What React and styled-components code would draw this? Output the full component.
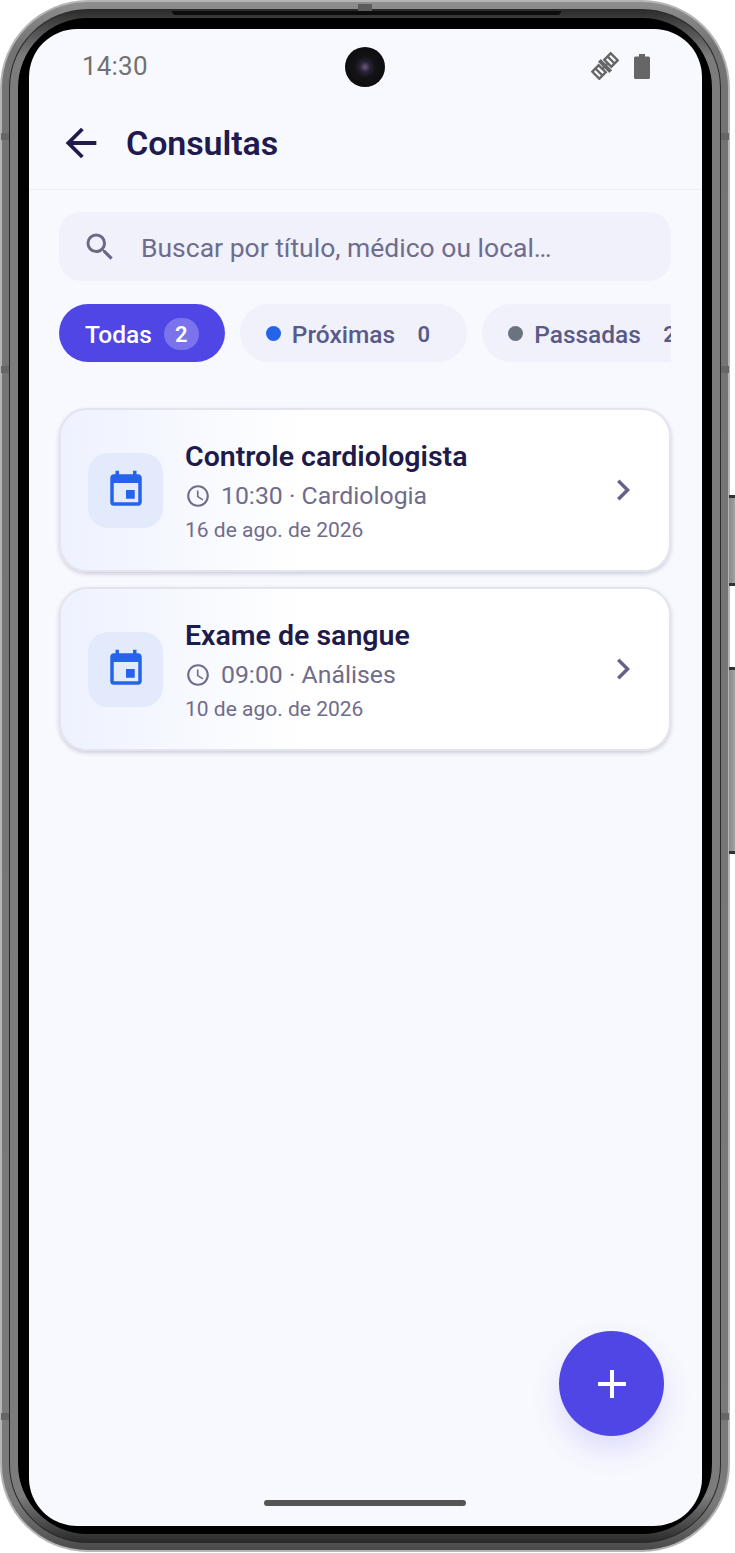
import React from 'react';
import styled, { createGlobalStyle } from 'styled-components';
import { MdArrowBack, MdSearch, MdEvent, MdAccessTime, MdChevronRight, MdAdd } from 'react-icons/md';

const Global = createGlobalStyle`
  html, body { margin: 0; padding: 0; background: #fff; }
  body { font-family: Roboto, "Liberation Sans", sans-serif; width: 735px; height: 1553px; overflow: hidden; }
  * { box-sizing: border-box; }
`;

const Stage = styled.div`
  position: relative;
  width: 735px;
  height: 1553px;
  padding-right: 5px;
`;

const SideButton = styled.div`
  position: absolute;
  right: 0;
  top: ${p => p.$top}px;
  width: 6px;
  height: ${p => p.$height}px;
  background: linear-gradient(90deg, #8a8a8a, #a2a2a2);
  border-top: 3px solid #333;
  border-bottom: 3px solid #333;
`;

const Notch = styled.div`
  position: absolute;
  ${p => (p.$side === 'left' ? 'left: 1px;' : 'left: 721px;')}
  top: ${p => p.$top}px;
  width: 8px;
  height: 7px;
  background: #666;
`;

const TopStud = styled.div`
  position: absolute;
  left: 358px;
  top: 4px;
  width: 14px;
  height: 7px;
  background: #5c5c5c;
`;

const Antenna = styled.div`
  position: absolute;
  left: 172px;
  top: 11px;
  width: 389px;
  height: 4px;
  border-radius: 0 0 4px 4px;
  background: #0c0c0c;
`;

const Frame = styled.div`
  width: 730px;
  height: 1552px;
  border-radius: 88px;
  padding: 2px;
  background: #b5b5b5;
`;

const FrameBand = styled.div`
  width: 100%;
  height: 100%;
  border-radius: 86px;
  padding: 7px;
  background: linear-gradient(#8e8e8e, #737373 3%, #7a7a7a 97%, #4a4a4a);
`;

const FrameLine = styled.div`
  width: 100%;
  height: 100%;
  border-radius: 79px;
  padding: 1px;
  background: #2a2a2a;
`;

const FrameInner = styled.div`
  width: 100%;
  height: 100%;
  border-radius: 78px;
  padding: 8px;
  background: linear-gradient(#2c2c2c, #7c7c7c 3%, #7c7c7c 97%, #2a2a2a);
`;

const Bezel = styled.div`
  width: 100%;
  height: 100%;
  border-radius: 70px;
  padding: 11px 10px 8px 11px;
  background: #000;
`;

const Screen = styled.div`
  position: relative;
  width: 100%;
  height: 100%;
  border-radius: 48px;
  overflow: hidden;
  background: #f8f9fe;
  display: flex;
  flex-direction: column;
`;

const StatusBar = styled.div`
  height: 76px;
  flex: none;
  display: flex;
  align-items: center;
  justify-content: space-between;
  padding: 0 52px 2px 53px;
`;

const Time = styled.span`
  font-size: 26px;
  font-weight: 400;
  letter-spacing: 0.2px;
  color: #727272;
`;

const StatusIcons = styled.div`
  display: flex;
  align-items: center;
  gap: 15px;
  color: #666;
`;

const Camera = styled.div`
  position: absolute;
  left: 316px;
  top: 18px;
  width: 40px;
  height: 40px;
  border-radius: 50%;
  background: radial-gradient(circle at 50% 50%, #6d5a7d 0, #2a2438 18%, #141418 36%, #070707 100%);
`;

const AppBar = styled.header`
  height: 85px;
  flex: none;
  display: flex;
  align-items: center;
  gap: 22px;
  padding: 0 0 9px 29px;
  border-bottom: 1px solid #eceef4;
  color: #211a4f;
`;

const Heading = styled.h1`
  margin: 0;
  font-size: 34px;
  font-weight: 600;
  letter-spacing: -0.1px;
  color: #211a4f;
`;

const Content = styled.main`
  flex: 1;
  display: flex;
  flex-direction: column;
  padding: 22px 31px 0 30px;
`;

const SearchBox = styled.div`
  height: 69px;
  flex: none;
  display: flex;
  align-items: center;
  gap: 23px;
  padding: 0 0 0 23px;
  border-radius: 22px;
  background: #f0f1fb;
  color: #6b6888;
`;

const SearchText = styled.span`
  font-size: 26.5px;
  padding-top: 2px;
  color: #6f6c8c;
`;

const Chips = styled.div`
  display: flex;
  gap: 15px;
  margin-top: 23px;
  overflow: hidden;
  flex: none;
`;

const Chip = styled.div`
  height: 58px;
  flex: none;
  display: flex;
  align-items: center;
  gap: ${p => (p.$active ? 12 : 11)}px;
  padding: 2px 26px 0;
  border-radius: 29px;
  font-size: 24.5px;
  font-weight: 500;
  background: ${p => (p.$active ? '#4f46e5' : '#f0f1fb')};
  color: ${p => (p.$active ? '#fff' : '#5a5a88')};
`;

const Dot = styled.i`
  width: 15px;
  height: 15px;
  margin-top: -2px;
  border-radius: 50%;
  background: ${p => p.$color};
`;

const Count = styled.span`
  min-width: 35px;
  height: 32px;
  border-radius: 16px;
  display: flex;
  align-items: center;
  justify-content: center;
  font-size: 22px;
  font-weight: 600;
  background: ${p => (p.$active ? '#7a73eb' : 'transparent')};
  color: ${p => (p.$active ? '#fff' : '#5a5a88')};
`;

const CardList = styled.div`
  display: flex;
  flex-direction: column;
  gap: 15px;
  margin-top: 46px;
`;

const Card = styled.article`
  height: 164px;
  display: flex;
  align-items: center;
  gap: 22px;
  padding: 0 27px;
  border-radius: 28px;
  border: 2px solid #e3e4ee;
  background: linear-gradient(90deg, #eef2fe 0%, #ffffff 40%);
  box-shadow: 0 2px 4px rgba(50, 45, 90, 0.22);
`;

const IconTile = styled.div`
  width: 75px;
  height: 75px;
  flex: none;
  border-radius: 20px;
  display: flex;
  align-items: center;
  justify-content: center;
  background: #e2eafc;
  color: #2563eb;
`;

const CardBody = styled.div`
  flex: 1;
  display: flex;
  flex-direction: column;
  gap: 4px;
  padding-top: 2px;
`;

const CardTitle = styled.div`
  font-size: 28.5px;
  font-weight: 600;
  color: #1e1b4b;
  line-height: 36px;
`;

const CardMeta = styled.div`
  display: flex;
  align-items: center;
  gap: 10px;
  font-size: 24.8px;
  color: #6f6c8c;
  line-height: 34px;
`;

const CardDate = styled.div`
  font-size: 21px;
  color: #6f6c8c;
  line-height: 26px;
`;

const Chevron = styled.div`
  flex: none;
  display: flex;
  margin-right: -2px;
  color: #64618a;
`;

const Fab = styled.button`
  position: absolute;
  left: 530px;
  top: 1302px;
  width: 105px;
  height: 105px;
  border: 0;
  border-radius: 50%;
  padding: 0;
  display: flex;
  align-items: center;
  justify-content: center;
  background: #4f46e5;
  color: #fff;
  box-shadow: 0 14px 30px rgba(79, 70, 229, 0.16);
`;

const HomeBar = styled.div`
  position: absolute;
  left: 235px;
  top: 1471px;
  width: 202px;
  height: 6px;
  border-radius: 3px;
  background: #555;
`;

const SatelliteIcon = () => (
  <svg width="28" height="28" viewBox="0 0 28 28" fill="none">
    <g transform="rotate(-45 14 14)" stroke="#666" strokeWidth="2.4">
      <rect x="1" y="9" width="9" height="10" />
      <line x1="5.5" y1="9" x2="5.5" y2="19" />
      <rect x="18" y="9" width="9" height="10" />
      <line x1="22.5" y1="9" x2="22.5" y2="19" />
      <rect x="12" y="6" width="4" height="16" fill="#666" stroke="none" />
      <line x1="10" y1="14" x2="18" y2="14" />
    </g>
  </svg>
);

const BatteryIcon = () => (
  <svg width="16" height="25" viewBox="0 0 16 25">
    <path d="M5 0h6v2.5h3.5a1.5 1.5 0 0 1 1.5 1.5v19.5a1.5 1.5 0 0 1-1.5 1.5h-13A1.5 1.5 0 0 1 0 23.5V4a1.5 1.5 0 0 1 1.5-1.5H5z" fill="#666" />
  </svg>
);

const items = [
  { title: 'Controle cardiologista', meta: '10:30 · Cardiologia', date: '16 de ago. de 2026' },
  { title: 'Exame de sangue', meta: '09:00 · Análises', date: '10 de ago. de 2026' },
];

const notches = [
  ['left', 133], ['left', 366], ['left', 1413],
  ['right', 133], ['right', 366], ['right', 1413],
];

export default function App() {
  return (
    <Stage>
      <Global />
      <SideButton $top={495} $height={91} />
      <SideButton $top={667} $height={187} />
      <Frame>
        <FrameBand>
          <FrameLine>
            <FrameInner>
              <Bezel>
                <Screen>
                  <StatusBar>
                    <Time>14:30</Time>
                    <StatusIcons>
                      <SatelliteIcon />
                      <BatteryIcon />
                    </StatusIcons>
                  </StatusBar>
                  <Camera />
                  <AppBar>
                    <MdArrowBack size={46} />
                    <Heading>Consultas</Heading>
                  </AppBar>
                  <Content>
                    <SearchBox>
                      <MdSearch size={36} />
                      <SearchText>Buscar por título, médico ou local…</SearchText>
                    </SearchBox>
                    <Chips>
                      <Chip $active>Todas<Count $active>2</Count></Chip>
                      <Chip><Dot $color="#2563eb" />Próximas<Count>0</Count></Chip>
                      <Chip><Dot $color="#6b7280" />Passadas<Count>2</Count></Chip>
                    </Chips>
                    <CardList>
                      {items.map(it => (
                        <Card key={it.title}>
                          <IconTile><MdEvent size={42} /></IconTile>
                          <CardBody>
                            <CardTitle>{it.title}</CardTitle>
                            <CardMeta><MdAccessTime size={26} />{it.meta}</CardMeta>
                            <CardDate>{it.date}</CardDate>
                          </CardBody>
                          <Chevron><MdChevronRight size={42} /></Chevron>
                        </Card>
                      ))}
                    </CardList>
                  </Content>
                  <Fab><MdAdd size={48} /></Fab>
                  <HomeBar />
                </Screen>
              </Bezel>
            </FrameInner>
          </FrameLine>
        </FrameBand>
      </Frame>
      <Antenna />
      <TopStud />
      {notches.map(([side, top]) => <Notch key={side + top} $side={side} $top={top} />)}
    </Stage>
  );
}
